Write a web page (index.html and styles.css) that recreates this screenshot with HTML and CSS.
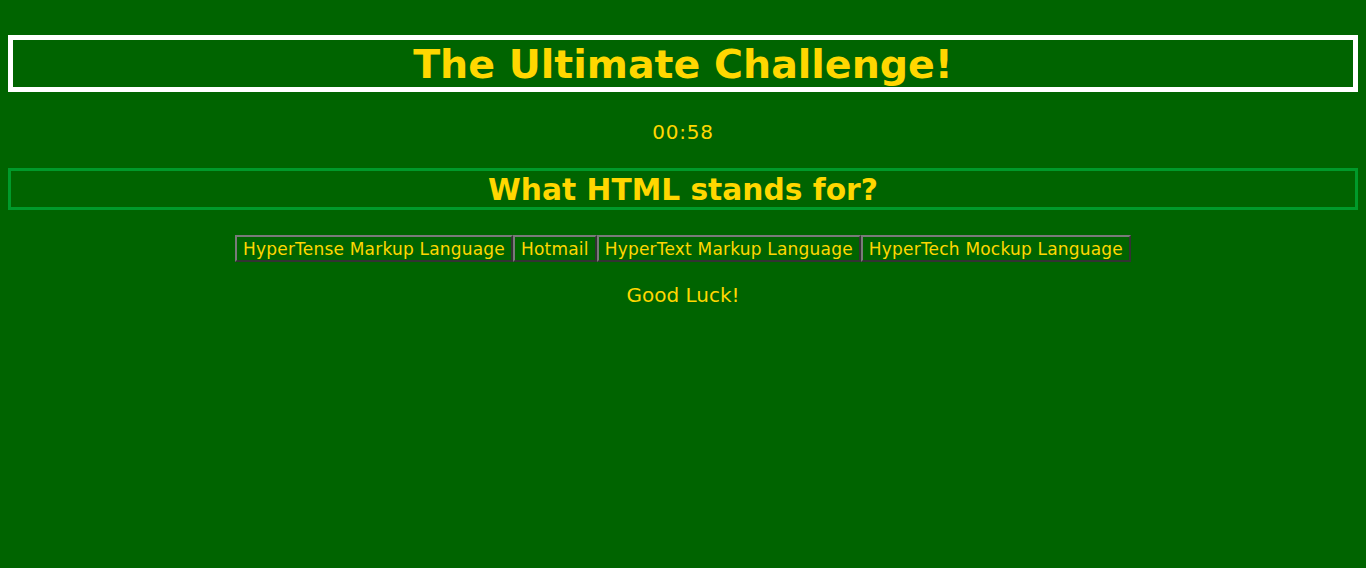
FILE: index.html
```html
<!DOCTYPE html>
<html>
<head>
<meta charset="utf-8">
<link rel="stylesheet" href="styles.css">
</head>
<body>
<h1 class="title">The Ultimate Challenge!</h1>
<p class="timer">00:58</p>
<h2 class="question">What HTML stands for?</h2>
<div class="answers">
<button class="answer">HyperTense Markup Language</button><button class="answer">Hotmail</button><button class="answer">HyperText Markup Language</button><button class="answer">HyperTech Mockup Language</button>
</div>
<p class="luck">Good Luck!</p>
</body>
</html>
```
FILE: styles.css
```css
html, body {
  background: #006400;
}
body {
  margin: 8px;
  font-family: "DejaVu Sans", Verdana, sans-serif;
  color: #ffd700;
  text-align: center;
}
.title {
  margin: 27px 0 0;
  border: 5px solid #ffffff;
  padding-top: 2px;
  font-size: 39.5px;
  line-height: 45px;
  font-weight: bold;
}
.timer {
  margin: 28px 0 0;
  font-size: 20px;
  line-height: 24px;
  letter-spacing: 0.8px;
}
.question {
  margin: 24px 0 0;
  border: 3px solid #009a2a;
  padding-top: 1px;
  font-size: 29.7px;
  line-height: 35px;
  font-weight: bold;
}
.answers {
  margin-top: 25px;
  display: flex;
  justify-content: center;
}
.answer {
  font-family: "DejaVu Sans", Verdana, sans-serif;
  font-size: 17px;
  line-height: 19px;
  letter-spacing: 0.2px;
  color: #ffd700;
  background: #006400;
  border-width: 2px;
  border-style: solid;
  border-color: #7a7a7a #333333 #333333 #7a7a7a;
  padding: 3px 6px 1px;
  margin: 0;
}
.luck {
  margin: 21px 0 0;
  font-size: 20px;
  line-height: 24px;
}
```
